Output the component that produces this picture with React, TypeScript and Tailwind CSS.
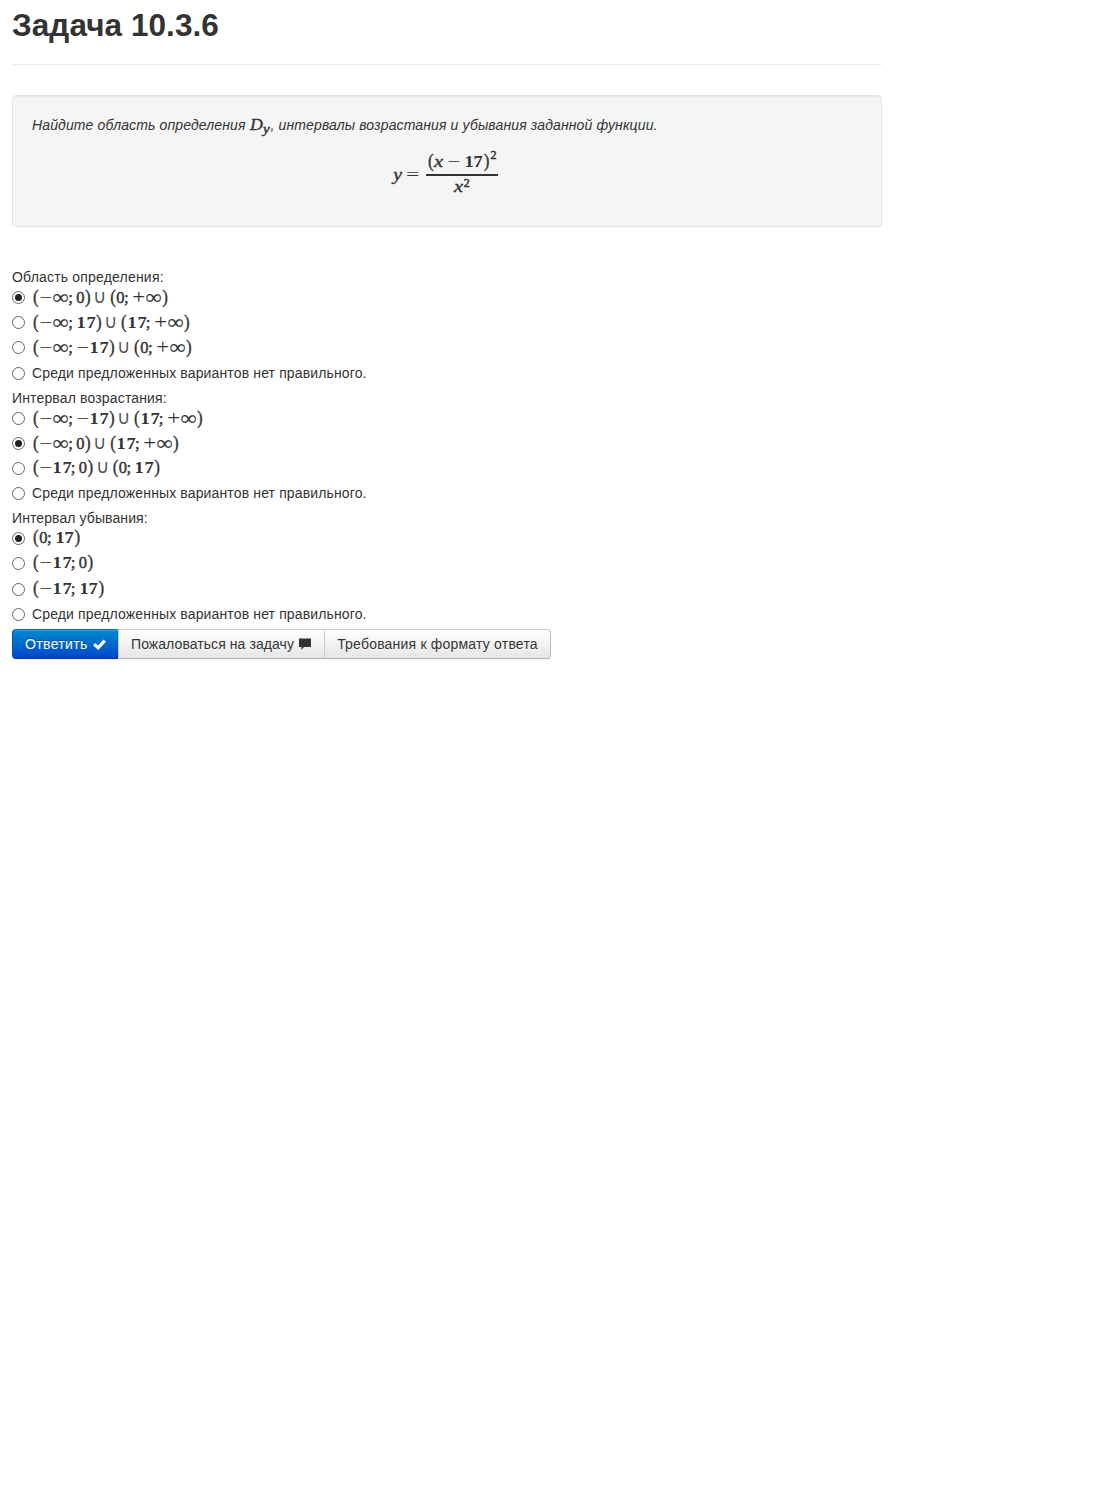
import React from "react";

type Glyph = { box: string; inner: string };

const GLYPHS: Record<string, Glyph> = {
  "(": { box: "w-[6.5px]", inner: "text-[17px] -translate-y-[0.4px] scale-y-105 [-webkit-text-stroke:0.3px]" },
  ")": { box: "w-[6.5px]", inner: "text-[17px] -translate-y-[0.4px] scale-y-105 [-webkit-text-stroke:0.3px]" },
  "−": { box: "w-[13px]", inner: "text-[17px] -translate-y-[0.4px] scale-x-130 [-webkit-text-stroke:0.15px]" },
  "+": { box: "w-[13px]", inner: "text-[17px] scale-x-135 scale-y-125" },
  "=": { box: "w-[13px]", inner: "text-[17px] scale-x-140" },
  "∞": { box: "w-[16.8px]", inner: "text-[18px] -translate-y-[0.2px] scale-x-128 scale-y-115 [-webkit-text-stroke:0.15px]" },
  ";": { box: "w-[4.6px] mr-[2.8px]", inner: "text-[17px] -translate-x-[0.5px] [-webkit-text-stroke:0.4px]" },
  "0": { box: "w-[8.4px]", inner: "text-[16.5px] -translate-y-[0.4px] [-webkit-text-stroke:0.45px]" },
  "1": { box: "w-[9.65px]", inner: "text-[16px] -translate-y-[0.4px] font-bold scale-x-115" },
  "7": { box: "w-[9.65px]", inner: "text-[16px] -translate-y-[0.4px] font-bold scale-x-115" },
  "∪": { box: "w-[11.2px] mx-[3.7px]", inner: "text-[16px] -translate-y-[1px] scale-x-115 scale-y-120 text-[#555]" },
  x: { box: "w-[9.6px]", inner: "text-[16.5px] italic scale-x-125 [-webkit-text-stroke:0.35px]" },
  y: { box: "w-[8.5px]", inner: "text-[16.5px] italic scale-x-120 [-webkit-text-stroke:0.35px]" },
};

function Formula({ value }: { value: string }) {
  return (
    <span className="inline-flex h-5 items-baseline whitespace-nowrap font-['Liberation_Serif',serif] leading-5">
      {Array.from(value).map((c, i) => (
        <span key={i} className={"inline-flex shrink-0 justify-center " + GLYPHS[c].box}>
          <span className={"inline-block leading-5 " + GLYPHS[c].inner}>{c}</span>
        </span>
      ))}
    </span>
  );
}

function Radio({ checked }: { checked?: boolean }) {
  return (
    <span className="mr-[7px] flex size-[13px] shrink-0 items-center justify-center rounded-full border border-[#666] bg-white">
      {checked && <span className="size-[7px] rounded-full bg-[#222]" />}
    </span>
  );
}

type Option = { math?: string; checked?: boolean; gap?: boolean };

const GROUPS: { title: string; tracking: string; options: Option[] }[] = [
  {
    title: "Область определения:",
    tracking: "tracking-[0.19px]",
    options: [
      { math: "(−∞;0)∪(0;+∞)", checked: true },
      { math: "(−∞;17)∪(17;+∞)" },
      { math: "(−∞;−17)∪(0;+∞)", gap: true },
      {},
    ],
  },
  {
    title: "Интервал возрастания:",
    tracking: "tracking-[0.15px]",
    options: [
      { math: "(−∞;−17)∪(17;+∞)" },
      { math: "(−∞;0)∪(17;+∞)", checked: true },
      { math: "(−17;0)∪(0;17)" },
      {},
    ],
  },
  {
    title: "Интервал убывания:",
    tracking: "tracking-[0.09px]",
    options: [
      { math: "(0;17)", checked: true },
      { math: "(−17;0)", gap: true },
      { math: "(−17;17)" },
      {},
    ],
  },
];

export default function App() {
  return (
    <main className="min-h-[1500px] bg-white pl-3 font-['Liberation_Sans',Arial,sans-serif] text-[14px] leading-5 text-[#333]">
      <div className="w-[870px]">
        <header className="h-[65px] border-b border-[#eee] pt-[5px]">
          <h1 className="text-[31.5px] leading-10 font-bold tracking-[0.06px]">Задача 10.3.6</h1>
        </header>
        <section className="mt-[30px] h-[132px] rounded-[4px] border border-[#e3e3e3] bg-[#f5f5f5] px-[19px] pt-[19px] shadow-[inset_0_1px_1px_rgba(0,0,0,0.05)]">
          <p className="flex h-5 items-baseline whitespace-pre italic tracking-[0.125px]">
            <span>Найдите область определения </span>
            <span className="inline-flex w-[21px] shrink-0 items-baseline font-['Liberation_Serif',serif] tracking-normal">
              <span className="inline-block w-[13px] origin-left scale-x-105 text-[17px] [-webkit-text-stroke:0.3px]">D</span>
              <span className="relative top-[3px] inline-block origin-left scale-x-120 text-[12.5px] [-webkit-text-stroke:0.4px]">y</span>
            </span>
            <span>, интервалы возрастания и убывания заданной функции.</span>
          </p>
          <div className="mt-[16px] ml-[361px] flex h-[44px]">
            <div className="flex pt-[14px]">
              <Formula value="y" />
              <span className="ml-[4.8px]">
                <Formula value="=" />
              </span>
            </div>
            <div className="ml-[6.7px] w-[72px]">
              <div className="flex h-[23px] pt-[1px] pl-[1.5px]">
                <Formula value="(x" />
                <span className="mx-[3.7px]">
                  <Formula value="−" />
                </span>
                <Formula value="17)" />
                <span className="-mt-[7px] ml-[0.8px] font-['Liberation_Serif',serif] text-[12px] [-webkit-text-stroke:0.5px]">2</span>
              </div>
              <div className="h-[2px] bg-[#333]" />
              <div className="flex pt-[1px] pl-[27.5px]">
                <Formula value="x" />
                <span className="-mt-[4px] ml-[0.7px] font-['Liberation_Serif',serif] text-[12px] [-webkit-text-stroke:0.5px]">2</span>
              </div>
            </div>
          </div>
        </section>
        <form className="mt-[40px]">
          {GROUPS.map((g) => (
            <fieldset key={g.title}>
              <div className={"h-5 " + g.tracking}>{g.title}</div>
              {g.options.map((o, i) => (
                <label key={i} className={"flex h-5 items-center " + (o.gap ? "mb-[6px]" : "mb-[5px]")}>
                  <Radio checked={o.checked} />
                  {o.math ? (
                    <span className="ml-[0.6px] flex">
                      <Formula value={o.math} />
                    </span>
                  ) : (
                    <span className="tracking-[0.135px]">Среди предложенных вариантов нет правильного.</span>
                  )}
                </label>
              ))}
            </fieldset>
          ))}
          <div className="flex h-[30px] w-[539px] rounded-[4px] whitespace-nowrap shadow-[0_1px_2px_rgba(0,0,0,0.05)]">
            <button
              type="button"
              className="flex w-[106px] items-center rounded-l-[4px] border border-r-0 border-[#0055bb] border-t-[#0074bb] border-b-[#003ba8] bg-linear-to-b from-[#08c] to-[#04c] pl-3 tracking-[0.35px] text-white shadow-[inset_0_1px_0_rgba(255,255,255,0.2)] [text-shadow:0_-1px_0_rgba(0,0,0,0.25)]"
            >
              Ответить
              <svg className="ml-[5px] size-[13px]" viewBox="0 0 13 13">
                <path d="M0 7.2 2.2 5 5 7.5 10.5 1.5 13 3.8 5.2 12Z" fill="#fff" />
              </svg>
            </button>
            <button
              type="button"
              className="flex w-[207px] items-center border border-[#ccc] border-b-[#b3b3b3] bg-linear-to-b from-white to-[#e6e6e6] pl-3 tracking-[0.07px] [text-shadow:0_1px_1px_rgba(255,255,255,0.75)]"
            >
              Пожаловаться на задачу
              <svg className="ml-[5px] h-[12px] w-[12px]" viewBox="0 0 12 12">
                <path d="M0 0.5H12V9H5L2.5 12V9H0Z" fill="#333" />
              </svg>
            </button>
            <button
              type="button"
              className="-ml-px w-[227px] rounded-r-[4px] border border-[#bbb] border-t-[#ccc] border-b-[#b3b3b3] border-l-[#ccc] bg-linear-to-b from-white to-[#e6e6e6] text-center tracking-[0.2px] [text-shadow:0_1px_1px_rgba(255,255,255,0.75)]"
            >
              Требования к формату ответа
            </button>
          </div>
        </form>
      </div>
    </main>
  );
}
